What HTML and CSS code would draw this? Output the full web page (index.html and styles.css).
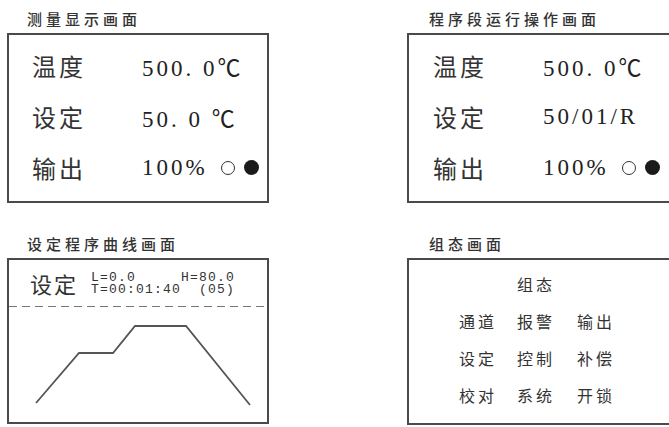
FILE: index.html
```html
<!DOCTYPE html>
<html lang="zh-CN">
<head>
  <meta charset="UTF-8" />
  <title>仪表画面</title>
  <link rel="stylesheet" href="styles.css">
</head>
<body>
  <main class="sheet">
    <!-- 测量显示 -->
    <section class="panel">
      <h2 class="panel-title">测量显示画面</h2>
      <div class="screen readout">
        <div class="row"><span class="label">温度</span><span class="value">500. 0℃</span></div>
        <div class="row"><span class="label">设定</span><span class="value">50. 0 ℃</span></div>
        <div class="row"><span class="label">输出</span><span class="value">100%</span><span class="lamp off"></span><span class="lamp on"></span></div>
      </div>
    </section>

    <!-- 程序段运行 -->
    <section class="panel">
      <h2 class="panel-title shift">程序段运行操作画面</h2>
      <div class="screen readout cut">
        <div class="row"><span class="label">温度</span><span class="value">500. 0℃</span></div>
        <div class="row"><span class="label">设定</span><span class="value">50/01/R</span></div>
        <div class="row"><span class="label">输出</span><span class="value">100%</span><span class="lamp off"></span><span class="lamp on"></span></div>
      </div>
    </section>

    <!-- 程序曲线 -->
    <section class="panel">
      <h2 class="panel-title">设定程序曲线画面</h2>
      <div class="screen curve">
        <div class="curve-head">
          <span class="label small">设定</span>
          <pre class="params">L=0.0     H=80.0
T=00:01:40  (05)</pre>
        </div>
        <div class="dash"></div>
        <svg class="chart" width="258" height="114" viewBox="0 0 258 114">
          <polyline points="27,96 70,46 104,46 126,19 177,19 241,98" fill="none" stroke="#555" stroke-width="1.8" />
        </svg>
      </div>
    </section>

    <!-- 组态 -->
    <section class="panel">
      <h2 class="panel-title shift">组态画面</h2>
      <div class="screen config cut">
        <div class="menu">
          <span class="menu-head">组态</span>
          <span>通道</span><span>报警</span><span>输出</span>
          <span>设定</span><span>控制</span><span>补偿</span>
          <span>校对</span><span>系统</span><span>开锁</span>
        </div>
      </div>
    </section>
  </main>
</body>
</html>
```

FILE: styles.css
```css
body {
  margin: 0;
  width: 669px;
  height: 427px;
  overflow: hidden;
  background: #fff;
  color: #2b2b2b;
  font-family: "Noto Sans CJK SC", sans-serif;
}

.sheet {
  display: grid;
  grid-template-columns: 262px 262px;
  column-gap: 138px;
  row-gap: 31px;
  padding: 9px 0 0 7px;
}

.panel-title {
  margin: 0 0 4px 20px;
  font-size: 15px;
  font-weight: 500;
  line-height: 20px;
  letter-spacing: 4px;
  color: #333;
}

.panel-title.shift {
  margin-left: 22px;
}

.screen {
  box-sizing: border-box;
  border: 2px solid #4a4a4a;
  background: #fff;
}

/* 右侧画面被裁切，没有右边框 */
.screen.cut {
  border-right: none;
}

/* 数值显示 */
.readout {
  height: 170px;
  padding: 5px 0 0 23px;
}

.readout.cut {
  padding-left: 24px;
}

.row {
  display: flex;
  align-items: center;
  height: 51px;
}

.label {
  width: 110px;
  flex: none;
  font-size: 24px;
  letter-spacing: 3px;
  color: #333;
}

.value {
  font-family: "Liberation Serif", "Noto Sans CJK SC", serif;
  font-size: 23px;
  letter-spacing: 3px;
  color: #222;
}

.lamp {
  display: inline-block;
  box-sizing: border-box;
  border-radius: 50%;
}

.lamp.off {
  width: 14px;
  height: 14px;
  margin-left: 13px;
  border: 1.3px solid #333;
}

.lamp.on {
  width: 15px;
  height: 15px;
  margin-left: 9px;
  background: #1a1a1a;
}

/* 程序曲线 */
.curve {
  height: 166px;
}

.curve-head {
  display: flex;
  align-items: center;
  height: 46px;
  padding-left: 21px;
}

.label.small {
  width: auto;
  font-size: 22px;
  letter-spacing: 2px;
}

.params {
  margin: 2px 0 0 13px;
  font-family: "Liberation Mono", monospace;
  font-size: 13px;
  line-height: 12px;
  letter-spacing: 1.2px;
  color: #333;
}

.dash {
  height: 1px;
  background: repeating-linear-gradient(to right, #777 0 8px, transparent 8px 13px);
}

.chart {
  display: block;
}

/* 组态 */
.config {
  height: 167px;
  padding: 5px 0 0 50px;
}

.menu {
  display: grid;
  grid-template-columns: 58px 60px auto;
  grid-auto-rows: 37px;
  align-items: center;
  font-size: 16px;
  letter-spacing: 3px;
  color: #333;
}

.menu-head {
  grid-column: 2 / span 2;
}
```
